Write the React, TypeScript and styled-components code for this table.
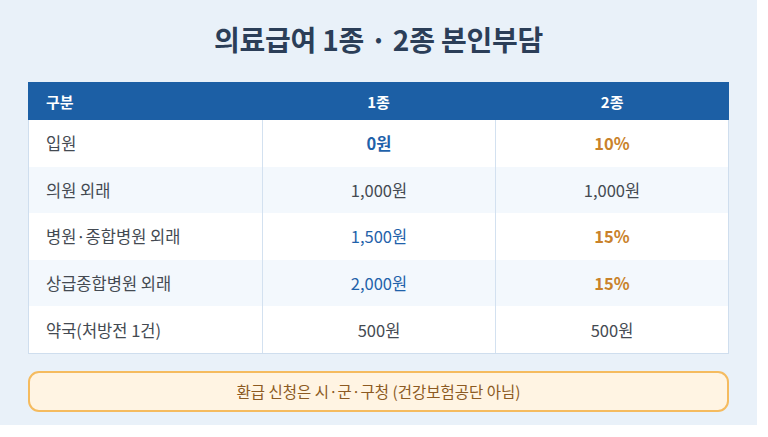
import React from "react";
import styled, { createGlobalStyle } from "styled-components";

const Global = createGlobalStyle`
  html, body { margin: 0; padding: 0; background: #ffffff; }
  body { font-family: "Noto Sans CJK KR", "Noto Sans", sans-serif; }
`;

const Panel = styled.div`
  width: 757px;
  height: 425px;
  box-sizing: border-box;
  background: #e9f1f9;
  padding: 18px 28px 0 28px;
  display: flex;
  flex-direction: column;
`;

const Title = styled.h1`
  margin: 0;
  height: 64px;
  line-height: 42px;
  text-align: center;
  font-size: 28px;
  font-weight: 700;
  color: #2b3e58;
  letter-spacing: -0.2px;
`;

const Table = styled.div`
  width: 701px;
  border: 1px solid #cfdeee;
  border-top: none;
  box-sizing: border-box;
  background: #ffffff;
`;

const HeaderRow = styled.div`
  display: grid;
  grid-template-columns: 1fr 1fr 1fr;
  height: 38px;
  background: #1c5fa5;
  margin: 0 -1px;
`;

const HeadCell = styled.div<{ $left?: boolean }>`
  display: flex;
  align-items: center;
  justify-content: ${(p) => (p.$left ? "flex-start" : "center")};
  padding-left: ${(p) => (p.$left ? "18px" : "0")};
  color: #ffffff;
  font-size: 15px;
  font-weight: 700;
`;

const Row = styled.div<{ $alt?: boolean }>`
  display: grid;
  grid-template-columns: 1fr 1fr 1fr;
  height: 46.6px;
  background: ${(p) => (p.$alt ? "#f3f8fd" : "#ffffff")};
`;

const Cell = styled.div<{ $left?: boolean; $tone?: "blue" | "orange" | "plain"; $bold?: boolean }>`
  display: flex;
  align-items: center;
  justify-content: ${(p) => (p.$left ? "flex-start" : "center")};
  padding-left: ${(p) => (p.$left ? "17px" : "0")};
  font-size: 16.5px;
  font-weight: ${(p) => (p.$bold ? 700 : 400)};
  color: ${(p) =>
    p.$tone === "blue" ? "#1f62aa" : p.$tone === "orange" ? "#c9822a" : "#444a52"};
  & + & {
    border-left: 1px solid #d3e1f0;
  }
`;

const Notice = styled.div`
  margin-top: 17px;
  width: 701px;
  height: 41px;
  box-sizing: border-box;
  border: 2px solid #f5bb5f;
  border-radius: 11px;
  background: #fff4e3;
  display: flex;
  align-items: center;
  justify-content: center;
  color: #8c5a22;
  font-size: 15.5px;
`;

type Tone = "blue" | "orange" | "plain";
const rows: { label: string; a: string; aTone: Tone; aBold: boolean; b: string; bTone: Tone; bBold: boolean }[] = [
  { label: "입원", a: "0원", aTone: "blue", aBold: true, b: "10%", bTone: "orange", bBold: true },
  { label: "의원 외래", a: "1,000원", aTone: "plain", aBold: false, b: "1,000원", bTone: "plain", bBold: false },
  { label: "병원·종합병원 외래", a: "1,500원", aTone: "blue", aBold: false, b: "15%", bTone: "orange", bBold: true },
  { label: "상급종합병원 외래", a: "2,000원", aTone: "blue", aBold: false, b: "15%", bTone: "orange", bBold: true },
  { label: "약국(처방전 1건)", a: "500원", aTone: "plain", aBold: false, b: "500원", bTone: "plain", bBold: false },
];

export default function App() {
  return (
    <>
      <Global />
      <Panel>
        <Title>의료급여 1종 · 2종 본인부담</Title>
        <Table>
          <HeaderRow>
            <HeadCell $left>구분</HeadCell>
            <HeadCell>1종</HeadCell>
            <HeadCell>2종</HeadCell>
          </HeaderRow>
          {rows.map((r, i) => (
            <Row key={r.label} $alt={i % 2 === 1}>
              <Cell $left>{r.label}</Cell>
              <Cell $tone={r.aTone} $bold={r.aBold}>{r.a}</Cell>
              <Cell $tone={r.bTone} $bold={r.bBold}>{r.b}</Cell>
            </Row>
          ))}
        </Table>
        <Notice>환급 신청은 시·군·구청 (건강보험공단 아님)</Notice>
      </Panel>
    </>
  );
}
